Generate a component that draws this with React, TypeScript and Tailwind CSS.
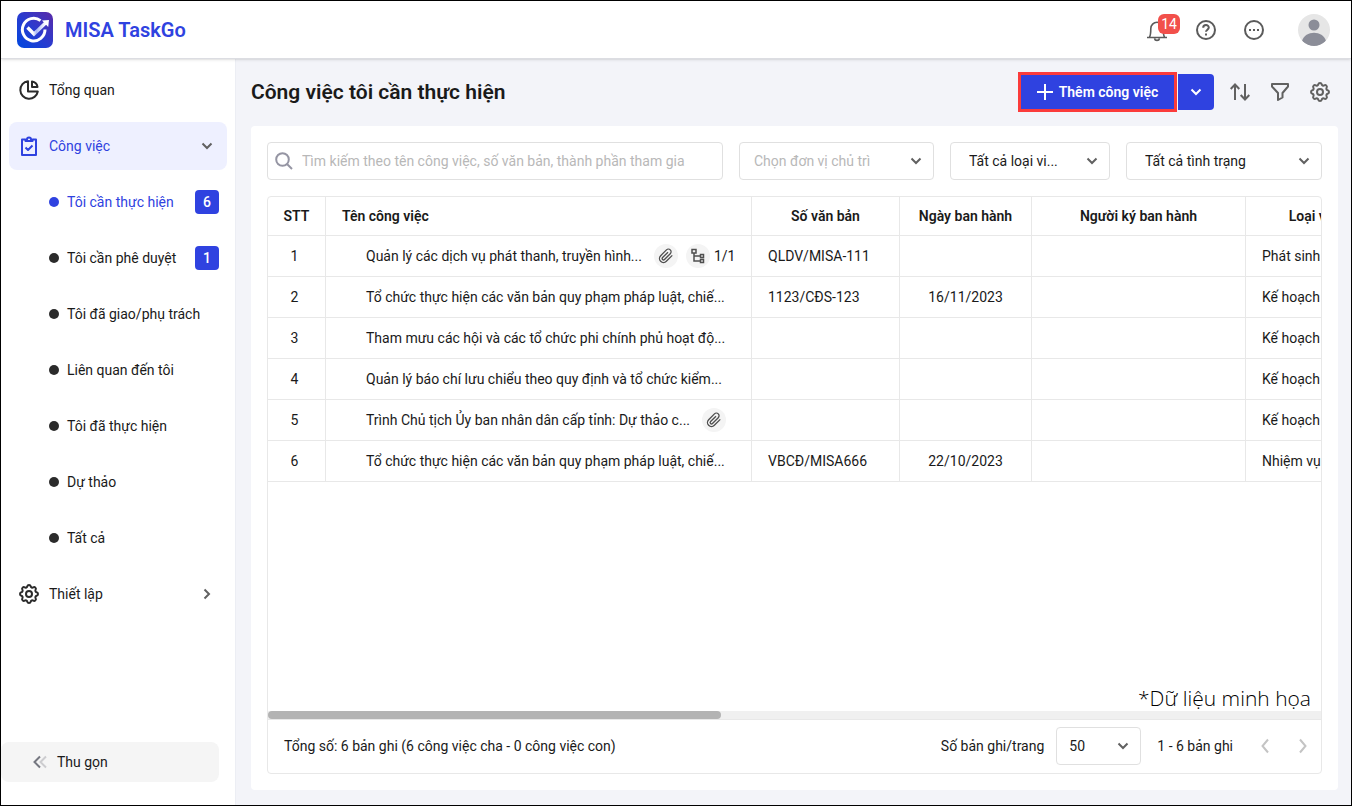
import { useState } from "react";
import type { ReactNode, SelectHTMLAttributes } from "react";
import { clsx } from "clsx";

type Task = {
  id: number;
  name: string;
  code?: string;
  date?: string;
  kind: string;
  attachment?: boolean;
  subtasks?: string;
};

const TASKS: Task[] = [
  { id: 1, name: "Quản lý các dịch vụ phát thanh, truyền hình...", code: "QLDV/MISA-111", kind: "Phát sinh", attachment: true, subtasks: "1/1" },
  { id: 2, name: "Tổ chức thực hiện các văn bản quy phạm pháp luật, chiế...", code: "1123/CĐS-123", date: "16/11/2023", kind: "Kế hoạch" },
  { id: 3, name: "Tham mưu các hội và các tổ chức phi chính phủ hoạt độ...", kind: "Kế hoạch" },
  { id: 4, name: "Quản lý báo chí lưu chiểu theo quy định và tổ chức kiểm...", kind: "Kế hoạch" },
  { id: 5, name: "Trình Chủ tịch Ủy ban nhân dân cấp tỉnh: Dự thảo c...", kind: "Kế hoạch", attachment: true },
  { id: 6, name: "Tổ chức thực hiện các văn bản quy phạm pháp luật, chiế...", code: "VBCĐ/MISA666", date: "22/10/2023", kind: "Nhiệm vụ" },
];

const SUB_MENU = [
  { label: "Tôi cần thực hiện", count: 6 },
  { label: "Tôi cần phê duyệt", count: 1 },
  { label: "Tôi đã giao/phụ trách" },
  { label: "Liên quan đến tôi" },
  { label: "Tôi đã thực hiện" },
  { label: "Dự thảo" },
  { label: "Tất cả" },
];

function Icon({ children, box = "0 0 24 24", width = 2, className }: { children: ReactNode; box?: string; width?: number; className?: string }) {
  return (
    <svg viewBox={box} fill="none" stroke="currentColor" strokeWidth={width} className={clsx("shrink-0", className)} aria-hidden="true">
      {children}
    </svg>
  );
}

function Chevron({ className }: { className?: string }) {
  return (
    <Icon box="0 0 12 12" className={className}>
      <path d="M1.5 3.5 6 8l4.5-4.5" />
    </Icon>
  );
}

function Gear({ className }: { className?: string }) {
  return (
    <Icon box="2 2 20 20" className={className}>
      <path d="M10.325 4.317c.426-1.756 2.924-1.756 3.35 0a1.724 1.724 0 0 0 2.573 1.066c1.543-.94 3.31.826 2.37 2.37a1.724 1.724 0 0 0 1.065 2.572c1.756.426 1.756 2.924 0 3.35a1.724 1.724 0 0 0-1.066 2.573c.94 1.543-.826 3.31-2.37 2.37a1.724 1.724 0 0 0-2.572 1.065c-.426 1.756-2.924 1.756-3.35 0a1.724 1.724 0 0 0-2.573-1.066c-1.543.94-3.31-.826-2.37-2.37a1.724 1.724 0 0 0-1.065-2.572c-1.756-.426-1.756-2.924 0-3.35a1.724 1.724 0 0 0 1.066-2.573c-.94-1.543.826-3.31 2.37-2.37 1 .608 2.296.07 2.572-1.065z" />
      <circle cx="12" cy="12" r="3" />
    </Icon>
  );
}

function Logo() {
  return (
    <svg viewBox="0 0 36 36" className="size-9" aria-hidden="true">
      <defs>
        <linearGradient id="logo-bg" x1="0" y1="1" x2="1" y2="0">
          <stop offset="0" stopColor="#0048e0" />
          <stop offset=".5" stopColor="#2a3bcf" />
          <stop offset="1" stopColor="#5a2aa8" />
        </linearGradient>
        <linearGradient id="logo-tick" x1="0" y1="0" x2="1" y2="0">
          <stop offset="0" stopColor="#fff" />
          <stop offset=".3" stopColor="#fff" />
          <stop offset=".5" stopColor="#a9b8f5" />
          <stop offset="1" stopColor="#fff" />
        </linearGradient>
      </defs>
      <rect width="36" height="36" rx="7" fill="url(#logo-bg)" />
      <path d="M23.5 8.6A11.3 11.3 0 1 0 28 17.6" fill="none" stroke="#fff" strokeWidth="3" />
      <path d="M10.5 15.500l6.5 6.500L28.500 11" fill="none" stroke="url(#logo-tick)" strokeWidth="3.4" />
      <path d="M25 8.5 32 8l-.8 7z" fill="#fff" />
    </svg>
  );
}

function Select({ boxClass, className, ...props }: SelectHTMLAttributes<HTMLSelectElement> & { boxClass?: string }) {
  return (
    <div className={clsx("relative shrink-0", boxClass)}>
      <select
        className={clsx("h-[38px] w-full appearance-none rounded border border-[#e0e0e0] bg-white pr-8 outline-none", className)}
        {...props}
      />
      <Chevron className="pointer-events-none absolute top-[13px] right-3 size-3 text-[#616161]" />
    </div>
  );
}

function Paperclip() {
  return (
    <Icon width={2} className="size-4">
      <path d="m21.4 11.1-8.9 8.9a6 6 0 0 1-8.5-8.5l8.7-8.7a4 4 0 0 1 5.7 5.7l-8.7 8.7a2 2 0 0 1-2.8-2.9l8.1-8" />
    </Icon>
  );
}

function Header() {
  return (
    <header className="z-10 flex h-[58px] shrink-0 items-center border-b border-[#dcdde2] bg-white pr-[21px] pl-4 shadow-sm">
      <Logo />
      <span className="ml-3 text-xl font-semibold text-[#2f42e0]">MISA TaskGo</span>
      <div className="ml-auto flex items-center text-[#5b5b5b]">
        <button type="button" aria-label="Thông báo" className="relative">
          <Icon box="0 0 22 24" width={1.6} className="h-6 w-[22px]">
            <path d="M1 19.5h20M3.5 19c1.3-2 1.3-4 1.3-8.5a6.2 6.2 0 0 1 12.4 0c0 4.5 0 6.5 1.3 8.5M8.5 20.5c.5 2.500 4.500 2.500 5 0" />
          </Icon>
          <span className="absolute -top-1 left-3 flex h-5 w-[22px] items-center justify-center rounded-md bg-[#f2504b] text-sm text-white">14</span>
        </button>
        <button type="button" aria-label="Trợ giúp" className="ml-[26px]">
          <Icon className="size-6">
            <circle cx="12" cy="12" r="9" />
            <path d="M9.2 9.8c0-3.700 5.600-3.500 5.600-.3 0 2-2.800 2.300-2.800 4.300M12 15.500v2" />
          </Icon>
        </button>
        <button type="button" aria-label="Thêm" className="ml-6">
          <Icon className="size-6">
            <circle cx="12" cy="12" r="9" />
            <path d="M7 12h2M11 12h2M15 12h2" />
          </Icon>
        </button>
        <button type="button" aria-label="Tài khoản" className="ml-8">
          <svg viewBox="0 0 32 32" className="size-8 rounded-full bg-[#e6e6e6]" aria-hidden="true">
            <circle cx="16" cy="11" r="5.5" fill="#8b8d98" />
            <path d="M4 27c3-11 21-11 24 0-5 7-19 7-24 0z" fill="#8b8d98" />
          </svg>
        </button>
      </div>
    </header>
  );
}

function Sidebar() {
  const [active, setActive] = useState(SUB_MENU[0].label);
  return (
    <aside className="flex w-[235px] shrink-0 flex-col border-r border-[#eceef4] bg-white pt-[7px] pb-[23px]">
      <nav className="flex flex-col gap-2 px-2">
        <a href="#overview" className="flex h-12 items-center px-[10px]">
          <Icon box="0 0 20 20" className="size-5 text-[#2b2b2b]">
            <path d="M9 1.200A8.800 8.800 0 1 0 18.800 11.500H9z" strokeLinejoin="round" />
            <path d="M13 1.500V7h5.500A6.500 6.500 0 0 0 13 1.500z" strokeLinejoin="round" />
          </Icon>
          <span className="ml-[10px]">Tổng quan</span>
        </a>
        <a href="#tasks" className="flex h-12 items-center rounded-lg bg-[#eef0ff] px-[10px] text-[#2f42e0]">
          <Icon box="0 0 20 20" className="size-5">
            <path d="M6 3.500H3V19h14V3.500h-3" strokeLinejoin="round" />
            <path d="M6.500 5V3.500H8a2 2 0 0 1 4 0h1.500V5zM6.500 11.500l2.500 2.500 4.500-4.500" strokeLinejoin="round" />
          </Icon>
          <span className="ml-[10px]">Công việc</span>
          <Chevron className="mr-1 ml-auto size-3 text-[#616161]" />
        </a>
        {SUB_MENU.map((item) => (
          <a
            key={item.label}
            href="#list"
            onClick={() => setActive(item.label)}
            className={clsx("flex h-12 items-center pr-2 pl-10", active === item.label && "text-[#2f42e0]")}
          >
            <span className={clsx("size-[10px] rounded-full", active === item.label ? "bg-[#2f42e0]" : "bg-[#2b2b2b]")} />
            <span className="ml-2 whitespace-nowrap">{item.label}</span>
            {item.count && (
              <span className="ml-auto flex size-6 items-center justify-center rounded bg-[#2f42e0] font-medium text-white">{item.count}</span>
            )}
          </a>
        ))}
        <a href="#settings" className="flex h-12 items-center px-[10px]">
          <Gear className="size-5 text-[#2b2b2b]" />
          <span className="ml-[10px]">Thiết lập</span>
          <Chevron className="mr-1 ml-auto size-3 -rotate-90 text-[#616161]" />
        </a>
      </nav>
      <button type="button" className="mt-auto mr-4 flex h-10 items-center rounded-lg bg-[#f5f5f5] pl-8">
        <Icon box="0 0 14 14" className="size-[14px]">
          <path d="M7 1.500 1.500 7 7 12.500" stroke="#757780" />
          <path d="M13 1.500 7.500 7l5.500 5.500" stroke="#cccccf" />
        </Icon>
        <span className="ml-[10px]">Thu gọn</span>
      </button>
    </aside>
  );
}

function Toolbar() {
  return (
    <div className="flex h-10 items-center pr-2">
      <h1 className="text-[21px] font-semibold">Công việc tôi cần thực hiện</h1>
      <button type="button" className="ml-auto flex h-10 w-[159px] items-center justify-center border-3 border-[#fb3b3b] bg-[#2f42e0] font-semibold text-white">
        <Icon box="0 0 16 16" className="mr-[6px] size-4">
          <path d="M8 0v16M0 8h16" />
        </Icon>
        Thêm công việc
      </button>
      <button type="button" aria-label="Tùy chọn thêm" className="ml-px flex size-9 items-center justify-center rounded-r bg-[#2f42e0] text-white">
        <Chevron className="size-3" />
      </button>
      <div className="ml-4 flex items-center gap-5 text-[#616161]">
        <button type="button" aria-label="Sắp xếp">
          <Icon box="0 0 20 20" className="size-5">
            <path d="M5 18V2.500M.7 7 5 2.500 9.300 7M15 2v15.500M10.700 13l4.300 4.500 4.300-4.500" />
          </Icon>
        </button>
        <button type="button" aria-label="Lọc">
          <Icon box="0 0 20 20" className="size-5">
            <path d="M2 2h16v2.500L12.500 11v4.500L8 18v-7L2 4.500z" strokeLinejoin="round" />
          </Icon>
        </button>
        <button type="button" aria-label="Cài đặt">
          <Gear className="size-5" />
        </button>
      </div>
    </div>
  );
}

function Filters() {
  return (
    <div className="flex gap-4">
      <div className="flex h-[38px] flex-1 items-center rounded border border-[#e0e0e0] pl-[7px]">
        <Icon box="0 0 18 18" className="size-[18px] text-[#9595a3]">
          <circle cx="7.500" cy="7.500" r="6.300" />
          <path d="m12 12 5 5" />
        </Icon>
        <input
          type="text"
          aria-label="Tìm kiếm"
          placeholder="Tìm kiếm theo tên công việc, số văn bản, thành phần tham gia"
          className="ml-[9px] h-full min-w-0 flex-1 outline-none placeholder:text-[#b8b8b8]"
        />
      </div>
      <Select aria-label="Đơn vị chủ trì" boxClass="w-[195px]" className="pl-[14px] text-[#b8b8b8]">
        <option>Chọn đơn vị chủ trì</option>
      </Select>
      <Select aria-label="Loại việc" boxClass="w-40" className="pl-[18px]">
        <option>Tất cả loại vi...</option>
      </Select>
      <Select aria-label="Tình trạng" boxClass="w-[196px]" className="pl-[18px]">
        <option>Tất cả tình trạng</option>
      </Select>
    </div>
  );
}

function TaskTable() {
  return (
    <div className="flex-1 overflow-hidden">
      <table className="w-[1120px] table-fixed border-separate border-spacing-0 whitespace-nowrap [&_td]:border-r [&_td]:border-b [&_td]:border-[#e8e8e8] [&_th]:border-r [&_th]:border-b [&_th]:border-[#e8e8e8] [&_th]:font-semibold">
        <thead>
          <tr className="h-[39px]">
            <th className="w-[58px]">STT</th>
            <th className="w-[426px] pl-4 text-left">Tên công việc</th>
            <th className="w-[148px]">Số văn bản</th>
            <th className="w-[132px]">Ngày ban hành</th>
            <th className="w-[214px]">Người ký ban hành</th>
            <th className="w-[142px]">Loại việc</th>
          </tr>
        </thead>
        <tbody>
          {TASKS.map((task) => (
            <tr key={task.id} className="h-[41px]">
              <td className="pr-1 text-center">{task.id}</td>
              <td className="pl-10">
                <div className="flex items-center">
                  <span>{task.name}</span>
                  {task.attachment && (
                    <span className="ml-3 flex size-6 items-center justify-center rounded-full bg-[#f4f4f4] text-[#4f4f4f]">
                      <Paperclip />
                    </span>
                  )}
                  {task.subtasks && (
                    <>
                      <span className="ml-2 flex size-6 items-center justify-center rounded-full bg-[#f4f4f4] text-[#4f4f4f]">
                        <Icon box="0 0 16 16" width={1.5} className="size-4">
                          <path d="M2 1.500h4v3.500H2zM4 5v8h6.500M4 8h6.500M10.500 6.500h3v3h-3zM10.500 11.500h3v3h-3z" />
                        </Icon>
                      </span>
                      <span className="ml-1">{task.subtasks}</span>
                    </>
                  )}
                </div>
              </td>
              <td className="pl-4">{task.code}</td>
              <td className="text-center">{task.date}</td>
              <td />
              <td className="pl-4">{task.kind}</td>
            </tr>
          ))}
        </tbody>
      </table>
    </div>
  );
}

function Pagination() {
  return (
    <div className="flex h-[54px] shrink-0 items-center border-t border-[#e8e8e8] pr-3 pb-[2px] pl-4">
      <span>Tổng số: 6 bản ghi (6 công việc cha - 0 công việc con)</span>
      <label htmlFor="page-size" className="mr-3 ml-auto">
        Số bản ghi/trang
      </label>
      <Select id="page-size" boxClass="w-[85px]" className="pl-3">
        <option>50</option>
      </Select>
      <span className="ml-4">1 - 6 bản ghi</span>
      <button type="button" aria-label="Trang trước" className="ml-[26px] text-[#c4c4c4]">
        <Icon box="0 0 12 16" className="h-4 w-3">
          <path d="M9 1.500 3.500 8 9 14.500" />
        </Icon>
      </button>
      <button type="button" aria-label="Trang sau" className="ml-[26px] text-[#c4c4c4]">
        <Icon box="0 0 12 16" className="h-4 w-3">
          <path d="M3 1.500 8.500 8 3 14.500" />
        </Icon>
      </button>
    </div>
  );
}

export default function App() {
  return (
    <div className="flex h-screen flex-col overflow-hidden border border-black bg-[#f3f4f9] font-['Roboto','Noto_Sans',sans-serif] text-sm text-[#1a1a1a]">
      <Header />
      <div className="flex min-h-0 flex-1">
        <Sidebar />
        <main className="flex min-w-0 flex-1 flex-col gap-[14px] pt-[13px] pr-[13px] pb-[15px] pl-[15px]">
          <Toolbar />
          <section className="flex min-h-0 flex-1 flex-col gap-4 rounded bg-white p-4">
            <Filters />
            <div className="relative flex min-h-0 flex-1 flex-col overflow-hidden rounded-sm border border-[#e8e8e8]">
              <TaskTable />
              <p className="absolute right-[10px] bottom-[60px] font-['Open_Sans','Noto_Sans',sans-serif] text-[21px] font-light text-black">*Dữ liệu minh họa</p>
              <div className="h-2 shrink-0 bg-[#f0f0f0]">
                <div className="h-2 w-[43%] rounded-full bg-[#b3b3b3]" />
              </div>
              <Pagination />
            </div>
          </section>
        </main>
      </div>
    </div>
  );
}
